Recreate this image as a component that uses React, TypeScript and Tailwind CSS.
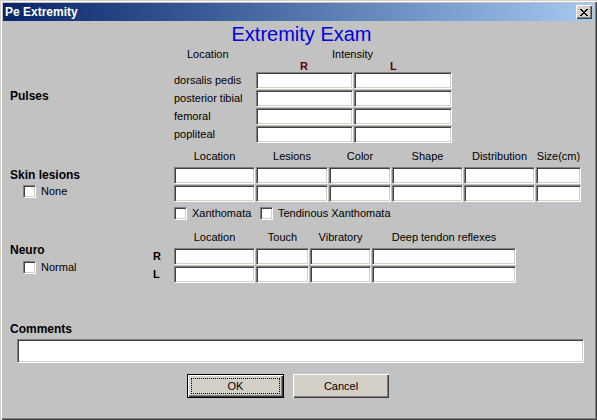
import React from 'react';

const sunken =
  'bg-white border border-t-[#808080] border-l-[#808080] border-b-white border-r-white shadow-[inset_1px_1px_#404040,inset_-1px_-1px_#d4d0c8]';

function Box({ className = '' }: { className?: string }) {
  return <div className={`${sunken} h-[17px] shrink-0 ${className}`} />;
}

function Check({ label, className = '' }: { label: string; className?: string }) {
  return (
    <div className={`flex items-center h-[13px] ${className}`}>
      <div className={`${sunken} w-[13px] h-[13px] shrink-0`} />
      <span className="ml-[5px] leading-[13px]">{label}</span>
    </div>
  );
}

const pulses = ['dorsalis pedis', 'posterior tibial', 'femoral', 'popliteal'];

const skinCols = [
  { label: 'Location', w: 'w-[81px]' },
  { label: 'Lesions', w: 'w-[72px]' },
  { label: 'Color', w: 'w-[62px]' },
  { label: 'Shape', w: 'w-[71px]' },
  { label: 'Distribution', w: 'w-[71px]' },
  { label: 'Size(cm)', w: 'w-[45px]' },
];

const neuroCols = [
  { label: 'Location', w: 'w-[81px]' },
  { label: 'Touch', w: 'w-[53px]' },
  { label: 'Vibratory', w: 'w-[61px]' },
  { label: 'Deep tendon reflexes', w: 'w-[144px]' },
];

export default function App() {
  return (
    <div className="w-[597px] h-[420px] bg-[#c2c2c2] p-[3px] shadow-[inset_1px_1px_#d4d0c8,inset_2px_2px_#ffffff,inset_-1px_-1px_#404040,inset_-2px_-2px_#808080] font-['Liberation_Sans',Arial,sans-serif] text-[11px] leading-[13px] text-black overflow-hidden">
      {/* title bar */}
      <div className="h-[18px] flex items-center bg-linear-to-r from-[#0a246a] to-[#a6caf0] pl-[2px] pr-[2px]">
        <span className="text-white font-bold text-[12px]">Pe Extremity</span>
        <div className="ml-auto w-[16px] h-[14px] bg-[#d4d0c8] flex items-center justify-center shadow-[inset_1px_1px_#ffffff,inset_-1px_-1px_#404040,inset_-2px_-2px_#808080]">
          <svg width="8" height="7" viewBox="0 0 8 7" shapeRendering="crispEdges">
            <path d="M0 0h2v1h1v1h2V1h1V0h2v1H7v1H6v1H5v1h1v1h1v1h1v1H6V6H5V5H3v1H2v1H0V6h1V5h1V4h1V3H2V2H1V1H0z" fill="#000" />
          </svg>
        </div>
      </div>

      {/* heading */}
      <div className="h-[27px] flex justify-center pl-[6px] text-[20px] leading-[27px] text-[#0000e0]">
        Extremity Exam
      </div>

      {/* pulses */}
      <div className="flex h-[12px] leading-[12px] pl-[184px]">
        <span className="w-[145px]">Location</span>
        <span>Intensity</span>
      </div>
      <div className="flex h-[12px] leading-[12px] pl-[297px] font-bold text-[#5a0000]">
        <span className="w-[90px]">R</span>
        <span>L</span>
      </div>
      <div className="flex">
        <div className="w-[171px] pl-[7px]">
          <div className="mt-[17px] text-[12px] leading-[14px] font-bold">Pulses</div>
        </div>
        <div className="flex flex-col gap-px">
          {pulses.map((p) => (
            <div key={p} className="flex h-[17px]">
              <span className="w-[82px] leading-[17px]">{p}</span>
              <Box className="w-[97px]" />
              <Box className="ml-px w-[98px]" />
            </div>
          ))}
        </div>
      </div>

      {/* skin lesions */}
      <div className="flex mt-[7px]">
        <div className="w-[171px] pl-[7px]">
          <div className="mt-[18px] text-[12px] leading-[14px] font-bold">Skin lesions</div>
          <Check label="None" className="mt-[3px] ml-[13px]" />
        </div>
        <div>
          <div className="flex gap-px h-[13px]">
            {skinCols.map((c) => (
              <span key={c.label} className={`${c.w} text-center`}>{c.label}</span>
            ))}
          </div>
          <div className="flex flex-col gap-px mt-[4px]">
            {[0, 1].map((r) => (
              <div key={r} className="flex gap-px">
                {skinCols.map((c) => (
                  <Box key={c.label} className={c.w} />
                ))}
              </div>
            ))}
          </div>
          <div className="flex mt-[5px]">
            <Check label="Xanthomata" className="w-[86px]" />
            <Check label="Tendinous Xanthomata" />
          </div>
        </div>
      </div>

      {/* neuro */}
      <div className="flex mt-[11px]">
        <div className="w-[150px] pl-[7px]">
          <div className="mt-[12px] text-[12px] leading-[14px] font-bold">Neuro</div>
          <Check label="Normal" className="mt-[4px] ml-[13px]" />
        </div>
        <div>
          <div className="flex gap-px h-[13px] pl-[21px]">
            {neuroCols.map((c) => (
              <span key={c.label} className={`${c.w} text-center`}>{c.label}</span>
            ))}
          </div>
          <div className="flex flex-col gap-px mt-[4px]">
            {['R', 'L'].map((r) => (
              <div key={r} className="flex h-[17px]">
                <span className="w-[21px] leading-[17px] font-bold">{r}</span>
                <div className="flex gap-px">
                  {neuroCols.map((c) => (
                    <Box key={c.label} className={c.w} />
                  ))}
                </div>
              </div>
            ))}
          </div>
        </div>
      </div>

      {/* comments */}
      <div className="pl-[7px] mt-[39px]">
        <div className="text-[12px] leading-[14px] font-bold">Comments</div>
        <div className={`${sunken} mt-[3px] ml-[7px] w-[567px] h-[24px]`} />
      </div>

      {/* buttons */}
      <div className="flex mt-[11px] pl-[184px] gap-[9px]">
        <button className="w-[97px] h-[24px] bg-[#d4d0c8] border border-black flex p-[3px] shadow-[inset_1px_1px_#ffffff,inset_-1px_-1px_#404040,inset_-2px_-2px_#808080]">
          <span className="flex-1 border border-dotted border-black flex items-center justify-center leading-[13px]">
            OK
          </span>
        </button>
        <button className="w-[96px] h-[24px] bg-[#d4d0c8] flex items-center justify-center shadow-[inset_1px_1px_#ffffff,inset_-1px_-1px_#404040,inset_-2px_-2px_#808080]">
          Cancel
        </button>
      </div>
    </div>
  );
}
